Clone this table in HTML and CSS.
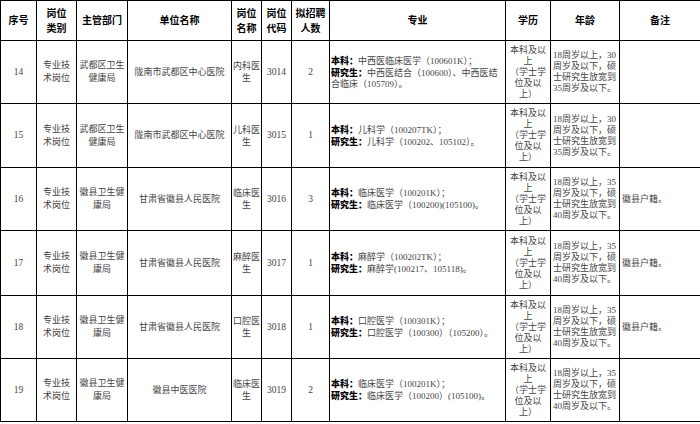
FILE: index.html
```html
<!DOCTYPE html>
<html lang="zh-CN">
<head>
<meta charset="utf-8">
<title>岗位表</title>
<link rel="stylesheet" href="styles.css">
</head>
<body>
<table class="jobs">
  <colgroup>
    <col class="c-no"><col class="c-type"><col class="c-dept"><col class="c-unit"><col class="c-name"><col class="c-code"><col class="c-num"><col class="c-major"><col class="c-edu"><col class="c-age"><col class="c-note">
  </colgroup>
  <thead>
    <tr class="head">
      <th>序号</th>
      <th>岗位<br>类别</th>
      <th>主管部门</th>
      <th>单位名称</th>
      <th>岗位<br>名称</th>
      <th>岗位<br>代码</th>
      <th>拟招聘<br>人数</th>
      <th>专业</th>
      <th>学历</th>
      <th>年龄</th>
      <th>备注</th>
    </tr>
  </thead>
  <tbody>
    <tr class="r63">
      <td class="num">14</td>
      <td class="tall">专业技<br>术岗位</td>
      <td class="tall">武都区卫生<br>健康局</td>
      <td>陇南市武都区中心医院</td>
      <td class="mid">内科医<br>生</td>
      <td class="num">3014</td>
      <td class="num">2</td>
      <td class="major"><b>本科：</b>中西医临床医学（100601K）；<br><b>研究生：</b>中西医结合（100600）、中西医结<br>合临床（105709）。</td>
      <td class="edu">本科及以<br>上<br>（学士学<br>位及以<br>上）</td>
      <td class="age">18周岁以上，30<br>周岁及以下，硕<br>士研究生放宽到<br>35周岁及以下。</td>
      <td class="note"></td>
    </tr>
    <tr class="r64">
      <td class="num">15</td>
      <td class="tall">专业技<br>术岗位</td>
      <td class="tall">武都区卫生<br>健康局</td>
      <td>陇南市武都区中心医院</td>
      <td class="mid">儿科医<br>生</td>
      <td class="num">3015</td>
      <td class="num">1</td>
      <td class="major"><b>本科：</b>儿科学（100207TK）；<br><b>研究生：</b>儿科学（100202、105102）。</td>
      <td class="edu">本科及以<br>上<br>（学士学<br>位及以<br>上）</td>
      <td class="age">18周岁以上，30<br>周岁及以下，硕<br>士研究生放宽到<br>35周岁及以下。</td>
      <td class="note"></td>
    </tr>
    <tr class="r63">
      <td class="num">16</td>
      <td class="tall">专业技<br>术岗位</td>
      <td class="tall">徽县卫生健<br>康局</td>
      <td>甘肃省徽县人民医院</td>
      <td class="mid">临床医<br>生</td>
      <td class="num">3016</td>
      <td class="num">3</td>
      <td class="major"><b>本科：</b>临床医学（100201K）；<br><b>研究生：</b>临床医学（100200)(105100)。</td>
      <td class="edu">本科及以<br>上<br>（学士学<br>位及以<br>上）</td>
      <td class="age">18周岁以上，35<br>周岁及以下，硕<br>士研究生放宽到<br>40周岁及以下。</td>
      <td class="note">徽县户籍。</td>
    </tr>
    <tr class="r65">
      <td class="num">17</td>
      <td class="tall">专业技<br>术岗位</td>
      <td class="tall">徽县卫生健<br>康局</td>
      <td>甘肃省徽县人民医院</td>
      <td class="mid">麻醉医<br>生</td>
      <td class="num">3017</td>
      <td class="num">1</td>
      <td class="major"><b>本科：</b>麻醉学（100202TK）；<br><b>研究生：</b>麻醉学(100217、105118)。</td>
      <td class="edu">本科及以<br>上<br>（学士学<br>位及以<br>上）</td>
      <td class="age">18周岁以上，35<br>周岁及以下，硕<br>士研究生放宽到<br>40周岁及以下。</td>
      <td class="note">徽县户籍。</td>
    </tr>
    <tr class="r63">
      <td class="num">18</td>
      <td class="tall">专业技<br>术岗位</td>
      <td class="tall">徽县卫生健<br>康局</td>
      <td>甘肃省徽县人民医院</td>
      <td class="mid">口腔医<br>生</td>
      <td class="num">3018</td>
      <td class="num">1</td>
      <td class="major"><b>本科：</b>口腔医学（100301K）；<br><b>研究生：</b>口腔医学（100300）（105200）。</td>
      <td class="edu">本科及以<br>上<br>（学士学<br>位及以<br>上）</td>
      <td class="age">18周岁以上，35<br>周岁及以下，硕<br>士研究生放宽到<br>40周岁及以下。</td>
      <td class="note">徽县户籍。</td>
    </tr>
    <tr class="r63">
      <td class="num">19</td>
      <td class="tall">专业技<br>术岗位</td>
      <td class="tall">徽县卫生健<br>康局</td>
      <td>徽县中医医院</td>
      <td class="mid">临床医<br>生</td>
      <td class="num">3019</td>
      <td class="num">2</td>
      <td class="major"><b>本科：</b>临床医学（100201K）；<br><b>研究生：</b>临床医学（100200）(105100)。</td>
      <td class="edu">本科及以<br>上<br>（学士学<br>位及以<br>上）</td>
      <td class="age">18周岁以上，35<br>周岁及以下，硕<br>士研究生放宽到<br>40周岁及以下。</td>
      <td class="note"></td>
    </tr>
  </tbody>
</table>
</body>
</html>
```

FILE: styles.css
```css
html, body {
  margin: 0;
  padding: 0;
  background: #fff;
}

.jobs {
  border-collapse: collapse;
  table-layout: fixed;
  width: 700px;
  font-family: "Liberation Serif", "Noto Sans CJK SC", serif;
  font-size: 9px;
  color: #444;
}

.c-no { width: 36px; }
.c-type { width: 40px; }
.c-dept { width: 51px; }
.c-unit { width: 104px; }
.c-name { width: 30px; }
.c-code { width: 30px; }
.c-num { width: 38px; }
.c-major { width: 176px; }
.c-edu { width: 45px; }
.c-age { width: 69px; }
.c-note { width: 81px; }

.jobs th,
.jobs td {
  border: 1px solid #000;
  padding: 0 1px;
  text-align: center;
  vertical-align: middle;
  white-space: nowrap;
  overflow: hidden;
}

.head { height: 40px; }
.r63 { height: 63px; }
.r64 { height: 64px; }
.r65 { height: 65px; }

.jobs th {
  font-family: "Noto Sans CJK SC", sans-serif;
  font-weight: bold;
  font-size: 10px;
  line-height: 14.5px;
  color: #000;
}

.jobs td {
  line-height: 11px;
}

.jobs td.tall {
  line-height: 13px;
}

.jobs td.mid {
  line-height: 12px;
}

.jobs td.num {
  font-size: 9.5px;
}

.jobs td.major {
  text-align: left;
  padding-left: 1px;
}

.jobs td.major b {
  font-family: "Noto Sans CJK SC", sans-serif;
  font-weight: 900;
  color: #000;
}

.jobs td.age,
.jobs td.note {
  text-align: left;
  padding-left: 2px;
}
```
